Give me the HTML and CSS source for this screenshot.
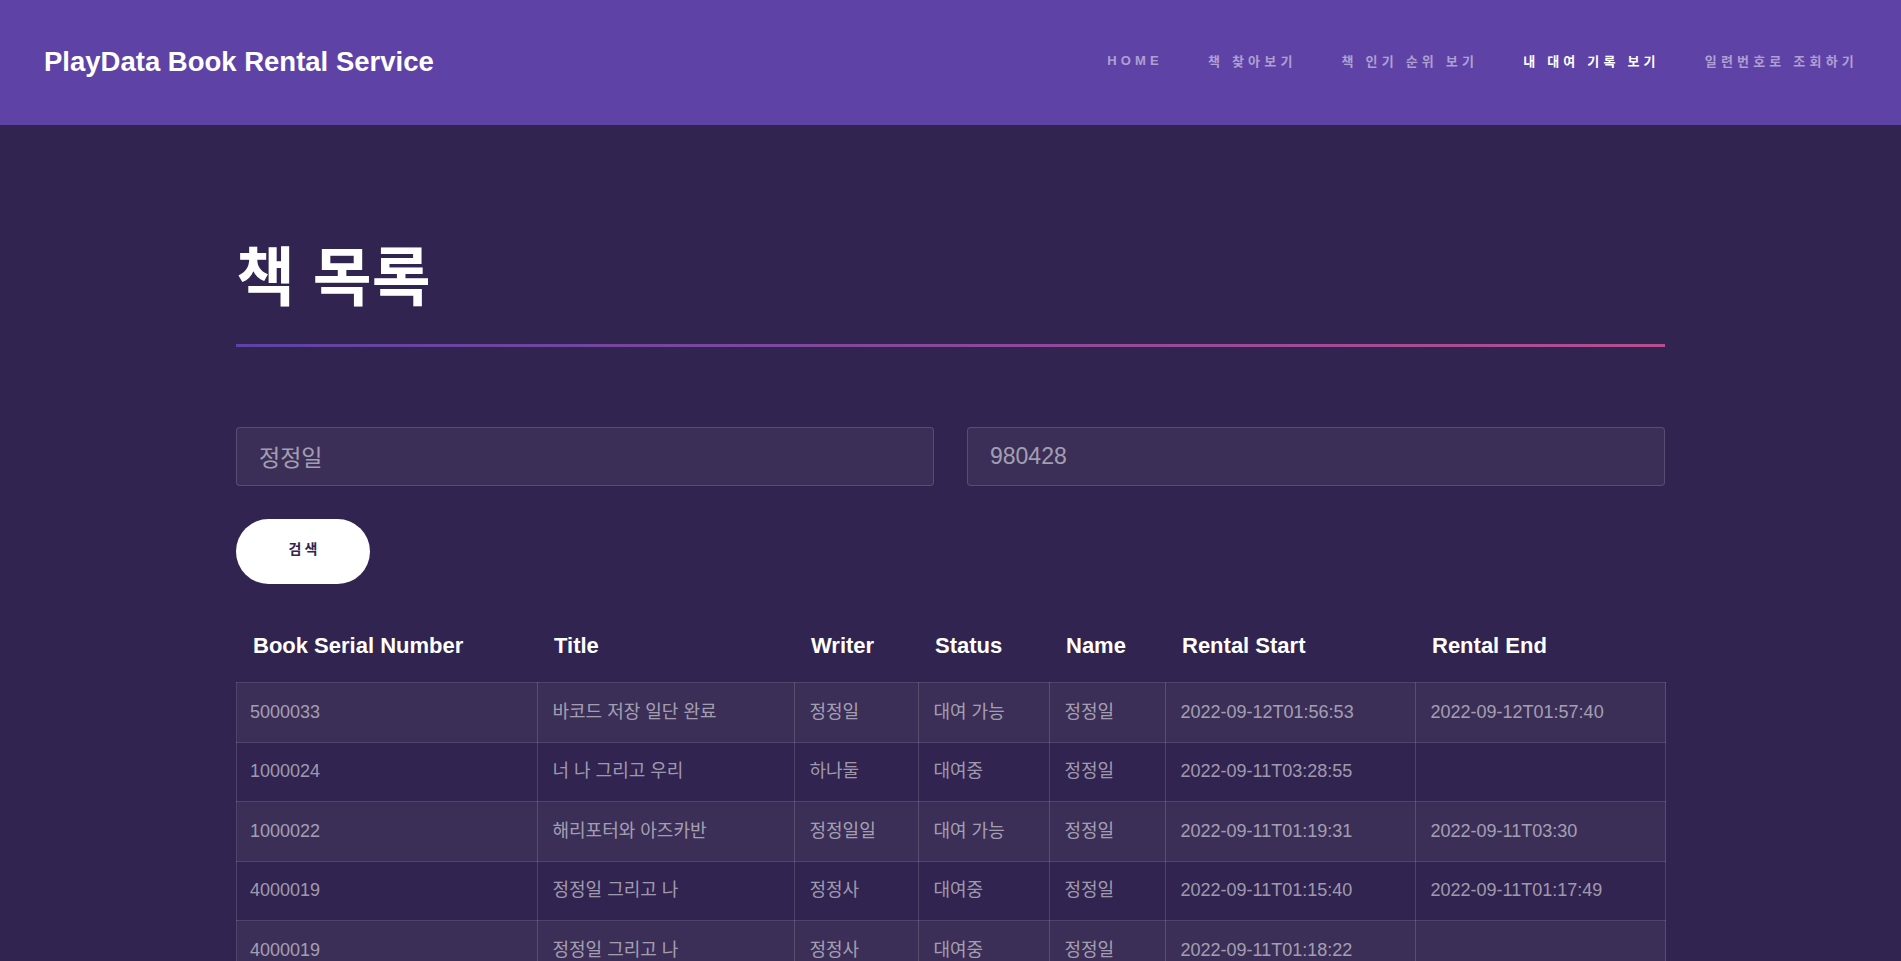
FILE: index.html
```html
<!DOCTYPE html>
<html lang="ko">
<head>
<meta charset="utf-8">
<title>PlayData Book Rental Service</title>
<link rel="stylesheet" href="styles.css">
</head>
<body>
<header class="topbar">
  <h1 class="brand">PlayData Book Rental Service</h1>
  <nav class="nav">
    <a class="nav-link" href="#">HOME</a>
    <a class="nav-link" href="#">책 찾아보기</a>
    <a class="nav-link" href="#">책 인기 순위 보기</a>
    <a class="nav-link active" href="#">내 대여 기록 보기</a>
    <a class="nav-link" href="#">일련번호로 조회하기</a>
  </nav>
</header>
<main class="wrapper">
  <h2 class="major">책 목록</h2>
  <div class="rule"></div>
  <form class="search">
    <div class="fields">
      <input class="field" type="text" value="정정일">
      <input class="field" type="text" value="980428">
    </div>
    <button class="btn-primary" type="button">검색</button>
  </form>
  <table class="records">
    <colgroup>
      <col class="c-serial"><col class="c-title"><col class="c-writer"><col class="c-status"><col class="c-name"><col class="c-start"><col class="c-end">
    </colgroup>
    <thead>
      <tr>
        <th>Book Serial Number</th><th>Title</th><th>Writer</th><th>Status</th><th>Name</th><th>Rental Start</th><th>Rental End</th>
      </tr>
    </thead>
    <tbody>
      <tr><td>5000033</td><td>바코드 저장 일단 완료</td><td>정정일</td><td>대여 가능</td><td>정정일</td><td>2022-09-12T01:56:53</td><td>2022-09-12T01:57:40</td></tr>
      <tr><td>1000024</td><td>너 나 그리고 우리</td><td>하나둘</td><td>대여중</td><td>정정일</td><td>2022-09-11T03:28:55</td><td></td></tr>
      <tr><td>1000022</td><td>해리포터와 아즈카반</td><td>정정일일</td><td>대여 가능</td><td>정정일</td><td>2022-09-11T01:19:31</td><td>2022-09-11T03:30</td></tr>
      <tr><td>4000019</td><td>정정일 그리고 나</td><td>정정사</td><td>대여중</td><td>정정일</td><td>2022-09-11T01:15:40</td><td>2022-09-11T01:17:49</td></tr>
      <tr><td>4000019</td><td>정정일 그리고 나</td><td>정정사</td><td>대여중</td><td>정정일</td><td>2022-09-11T01:18:22</td><td></td></tr>
    </tbody>
  </table>
</main>
</body>
</html>
```
FILE: styles.css
```css
html {
  overflow: hidden;
}
body {
  margin: 0;
  background: #312450;
  color: rgba(255, 255, 255, 0.55);
  font-family: "Liberation Sans", "Noto Sans CJK KR", sans-serif;
}
.topbar {
  height: 125px;
  background: #5e42a6;
  display: flex;
  align-items: center;
  justify-content: space-between;
  padding: 0 0 0 44px;
}
.brand {
  margin: 0;
  color: #fff;
  font-size: 27.5px;
  font-weight: bold;
  line-height: 1;
  padding-bottom: 1px;
}
.nav {
  display: flex;
  align-items: center;
  gap: 45px;
  padding-right: 43px;
  padding-bottom: 4px;
}
.nav-link {
  color: rgba(255, 255, 255, 0.5);
  text-decoration: none;
  font-size: 13px;
  font-weight: bold;
  letter-spacing: 4.2px;
  text-transform: uppercase;
}
.nav-link.active {
  color: #fff;
}
.wrapper {
  width: 1429px;
  margin: 0 auto;
  padding-top: 109px;
}
.major {
  margin: 0;
  color: #fff;
  font-family: "Noto Sans CJK KR", sans-serif;
  font-size: 64px;
  font-weight: bold;
  line-height: 1.2;
}
.rule {
  height: 3px;
  margin-top: 33px;
  background: linear-gradient(to right, #5e42a6, #b74e91);
}
.search {
  margin-top: 80px;
}
.fields {
  display: flex;
  gap: 33px;
}
.field {
  flex: 1;
  box-sizing: border-box;
  height: 59px;
  padding: 0 22px;
  background: rgba(255, 255, 255, 0.05);
  border: 1px solid rgba(255, 255, 255, 0.15);
  border-radius: 4px;
  color: rgba(255, 255, 255, 0.55);
  font-family: "Liberation Sans", "Noto Sans CJK KR", sans-serif;
  font-size: 23px;
  outline: none;
}
.btn-primary {
  display: block;
  margin-top: 33px;
  width: 134px;
  height: 65px;
  border: 0;
  border-radius: 33px;
  background: #fff;
  color: #312450;
  font-family: "Liberation Sans", "Noto Sans CJK KR", sans-serif;
  font-size: 14px;
  font-weight: bold;
  letter-spacing: 3px;
  padding: 0 0 7px 3px;
}
.records {
  margin-top: 43.5px;
  width: 1429px;
  table-layout: fixed;
  border-collapse: collapse;
}
.c-serial { width: 301px; }
.c-title { width: 257px; }
.c-writer { width: 124px; }
.c-status { width: 131px; }
.c-name { width: 116px; }
.c-start { width: 250px; }
.c-end { width: 250px; }
.records th {
  color: #fff;
  font-size: 22px;
  font-weight: bold;
  line-height: 1.75;
  text-align: left;
  padding: 0 16px 16.5px 16.5px;
}
.records td {
  font-size: 18px;
  line-height: 1.75;
  padding: 13.5px 13px 13.5px 14.5px;
  border: 1px solid rgba(255, 255, 255, 0.15);
  white-space: nowrap;
}
.records td:first-child {
  padding-left: 13px;
}
.records tbody tr:nth-child(odd) {
  background: rgba(255, 255, 255, 0.05);
}
```
